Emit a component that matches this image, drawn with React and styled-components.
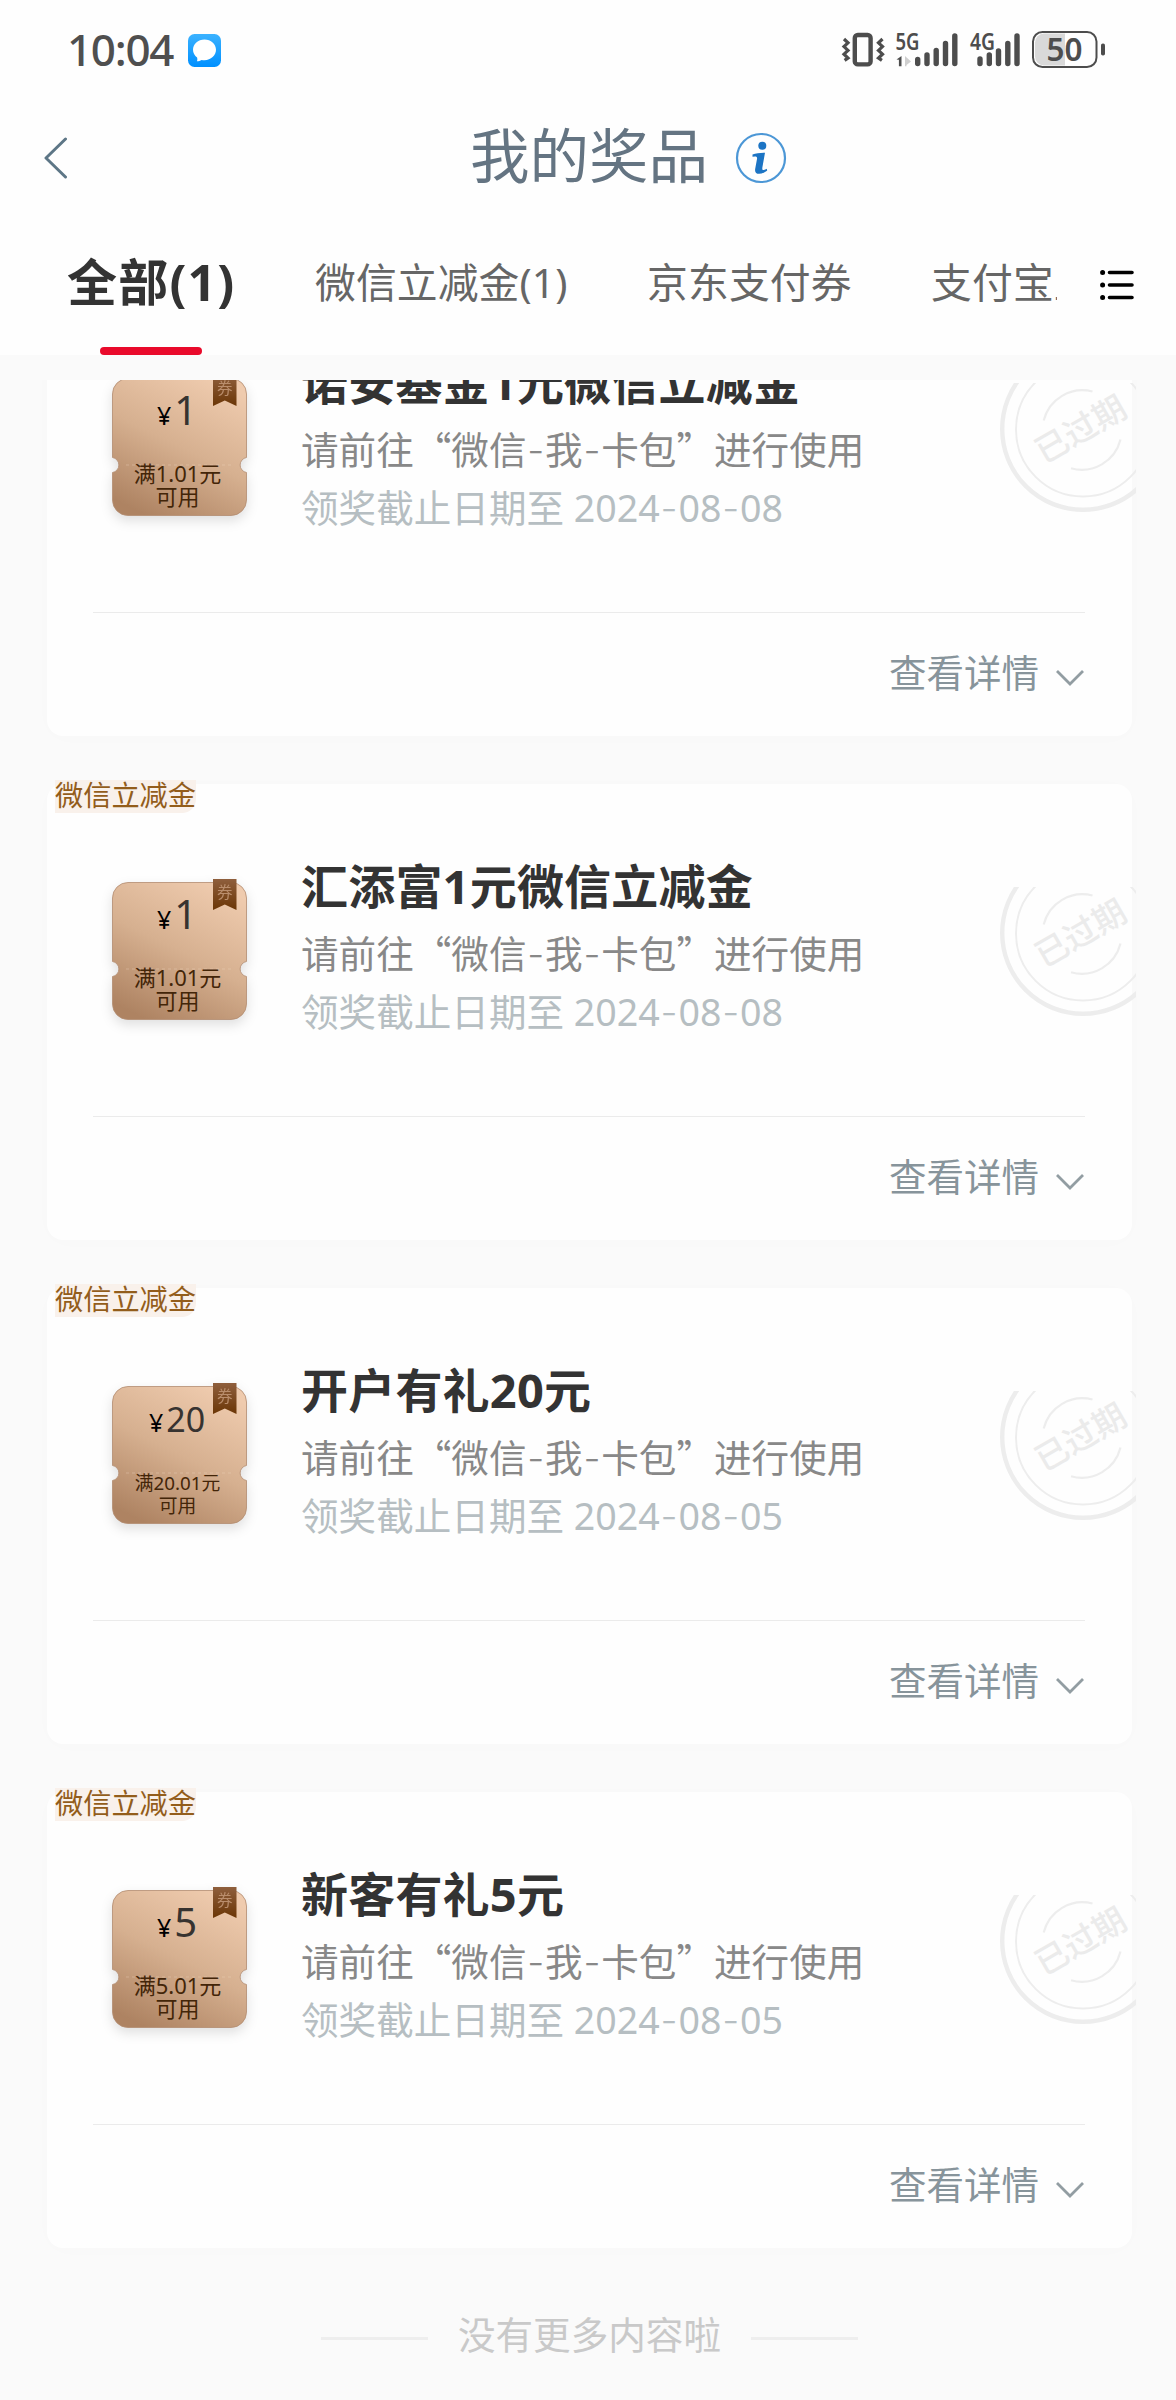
import React from "react";
import styled, { createGlobalStyle } from "styled-components";

const prizes = [
  { id: 1, title: "诺安基金1元微信立减金", amount: "1", limit: "1.01", date: "2024-08-08" },
  { id: 2, title: "汇添富1元微信立减金", amount: "1", limit: "1.01", date: "2024-08-08" },
  { id: 3, title: "开户有礼20元", amount: "20", limit: "20.01", date: "2024-08-05" },
  { id: 4, title: "新客有礼5元", amount: "5", limit: "5.01", date: "2024-08-05" },
];

const tabs = ["全部(1)", "微信立减金(1)", "京东支付券", "支付宝立减金"];

function withDashes(text) {
  return text.split("-").map((part, index) => (
    <React.Fragment key={index}>
      {index > 0 && <Dash>-</Dash>}
      {part}
    </React.Fragment>
  ));
}

function StatusIcons() {
  return (
    <StatusSvg width="264" height="40" viewBox="841 30 264 40">
      <g fill="none" stroke="#4d4d4d">
        <rect x="854.8" y="35" width="15.8" height="29.4" rx="3" strokeWidth="4.4" />
        <path d="M844 39l4 3.8-4 3.8 4 3.8-4 3.8 4 3.8-3.4 2.4" strokeWidth="3.2" />
        <path d="M882.5 39l-4 3.8 4 3.8-4 3.8 4 3.8-4 3.8 3.4 2.4" strokeWidth="3.2" />
        <rect x="1033" y="32" width="63.5" height="35" rx="9.5" strokeWidth="2" />
      </g>
      <path d="M1065 33.500v32h-21a9 9 0 0 1-9-9v-14a9 9 0 0 1 9-9z" fill="#d9d9d9" />
      <rect x="1101" y="43.5" width="4" height="12" rx="1.8" fill="#4d4d4d" />
      <g stroke="#4d4d4d" strokeWidth="5.4" strokeLinecap="round">
        <path d="M917.7 59.5v4M927 55v8.5M936.2 50.5v13M945.5 43.5v20M954.8 36v27.5" />
        <path d="M980 59v4.5M989.3 55v8.5M998.5 51v12.5M1007.8 43.5v20M1017 36v27.5" />
      </g>
      <path d="M896.5 59.5l5-3.500v10.200h-2.600v-6.500z" fill="#4d4d4d" />
      <path d="M905 56l6 5.500-4.500 3.500v1.200h-1.500z" fill="#cfcfcf" />
      <g fill="#4d4d4d" fontFamily="Noto Sans, sans-serif" fontWeight="600">
        <text x="895.5" y="49.5" fontSize="23" textLength="24" lengthAdjust="spacingAndGlyphs">5G</text>
        <text x="970" y="49.5" fontSize="23" textLength="25" lengthAdjust="spacingAndGlyphs">4G</text>
        <text x="1046.5" y="61" fontSize="32" textLength="36" lengthAdjust="spacingAndGlyphs">50</text>
      </g>
    </StatusSvg>
  );
}

function MessageIcon() {
  return (
    <svg width="33" height="33" viewBox="0 0 33 33">
      <defs>
        <linearGradient id="msg" x1="0" y1="0" x2="0" y2="1">
          <stop offset="0" stopColor="#3bb2ff" />
          <stop offset="1" stopColor="#0090ff" />
        </linearGradient>
      </defs>
      <rect width="33" height="33" rx="6.5" fill="url(#msg)" />
      <path
        d="M16.500 5.500c6.400 0 11.500 4.600 11.500 10.300s-5.100 10.400-11.500 10.400c-1 0-2-.1-2.900-.3-1.400.8-2.900 1.300-4.600 1.300.5-1.200.5-2.400.1-3.600C6.600 21.700 5 18.900 5 15.800 5 10.100 10.100 5.500 16.500 5.500z"
        fill="#fff"
      />
    </svg>
  );
}

function InfoIcon() {
  return (
    <svg width="52" height="52" viewBox="0 0 52 52">
      <circle cx="26" cy="26" r="24" fill="none" stroke="#4c97d6" strokeWidth="2.2" />
      <circle cx="27.3" cy="13.7" r="4" fill="#1c74c4" />
      <path
        d="M17.500 22.500c3.500-1.200 7.500-1.700 12.500-1.700l-2.600 14.500c-.4 2.200.2 2.900 1.500 2.600 1-.2 1.800-.6 2.800-1.100l.5 1.600c-2.800 2.400-5.600 3.400-8 3.400-3.200 0-4.600-1.700-4-5l1.800-9.700c.3-1.700-.2-2.500-1.900-2.500l-2.600.1z"
        fill="#1c74c4"
      />
    </svg>
  );
}

function CouponArt({ id }) {
  return (
    <CouponSvg width="135" height="145" viewBox="0 -4 135 145">
      <defs>
        <linearGradient id={`face${id}`} x1="0.75" y1="0" x2="0.25" y2="1">
          <stop offset="0" stopColor="#efcbae" />
          <stop offset="0.5" stopColor="#d6b090" />
          <stop offset="1" stopColor="#ae8362" />
        </linearGradient>
        <linearGradient id={`ribbon${id}`} x1="0" y1="0" x2="0" y2="1">
          <stop offset="0" stopColor="#8f5f3d" />
          <stop offset="1" stopColor="#6b3606" />
        </linearGradient>
      </defs>
      <path
        d="M16 .5h103a15.500 15.500 0 0 1 15.500 15.500v63.500a7.600 7.600 0 0 0 0 15V122a15.500 15.500 0 0 1-15.500 15.500H16A15.500 15.500 0 0 1 .5 122V94.500a7.600 7.600 0 0 0 0-15V16A15.500 15.500 0 0 1 16 .5z"
        fill={`url(#face${id})`}
        stroke="#b38c70"
        strokeOpacity="0.8"
      />
      <path d="M14 87h108" stroke="#f3d9c4" strokeOpacity="0.35" strokeDasharray="3 3" />
      <path d="M101-3h23.500v31l-11.700-5.500L101 28z" fill={`url(#ribbon${id})`} />
      <text x="105" y="16" fontSize="15.5" fill="#b98d6c" fontFamily="Noto Sans CJK SC, sans-serif">券</text>
    </CouponSvg>
  );
}

function ExpiredStamp() {
  return (
    <Stamp width="136" height="130" viewBox="0 0 136 130">
      <g fill="none" stroke="#ededed">
        <circle cx="83" cy="46" r="80.8" strokeWidth="4.4" />
        <circle cx="83" cy="46.5" r="67" strokeWidth="2" />
        <path d="M43.7 37.500A40 40 0 0 1 92.500 8.500M120.500 56.500A40 40 0 0 1 71 85.300" strokeWidth="2.2" />
      </g>
      <text
        x="80.5"
        y="58"
        fontSize="33"
        fontWeight="500"
        fill="#ebebeb"
        textAnchor="middle"
        fontFamily="Noto Sans CJK SC, sans-serif"
        transform="rotate(-30 80.5 46)"
      >
        已过期
      </text>
    </Stamp>
  );
}

function PrizeCard({ prize }) {
  const small = prize.amount.length > 1;
  return (
    <Card>
      <Tag>微信立减金</Tag>
      <CardBody>
        <Coupon>
          <CouponArt id={prize.id} />
          <Price $small={small}>
            <small>¥</small>
            {prize.amount}
          </Price>
          <Condition $small={small}>
            满{prize.limit}元<br />
            可用
          </Condition>
        </Coupon>
        <Info>
          <Title>{prize.title}</Title>
          <Desc>{withDashes("请前往“微信-我-卡包”进行使用")}</Desc>
          <Deadline>领奖截止日期至 {withDashes(prize.date)}</Deadline>
        </Info>
      </CardBody>
      <CardFooter>
        查看详情
        <svg width="30" height="18" viewBox="0 0 30 18">
          <path d="M2 2l13 13L28 2" fill="none" stroke="#929da2" strokeWidth="2.8" />
        </svg>
      </CardFooter>
      <ExpiredStamp />
    </Card>
  );
}

export default function App() {
  return (
    <Page lang="zh-CN">
      <GlobalStyle />
      <StatusBar>
        <Clock>10:04</Clock>
        <MessageIcon />
        <Spacer />
        <StatusIcons />
      </StatusBar>
      <NavBar>
        <BackButton>
          <svg width="24" height="42" viewBox="0 0 24 42">
            <path d="M21.500 2L2 21l19.500 19" fill="none" stroke="#5d7686" strokeWidth="3" strokeLinecap="round" strokeLinejoin="round" />
          </svg>
        </BackButton>
        <Heading>我的奖品</Heading>
        <InfoIcon />
      </NavBar>
      <TabBar>
        <TabList>
          {tabs.map((tab, index) => (
            <Tab key={tab} $active={index === 0}>
              {tab}
            </Tab>
          ))}
        </TabList>
        <svg width="34" height="32" viewBox="0 0 34 32">
          <g stroke="#000" strokeWidth="3.6" strokeLinecap="round">
            <path d="M9.500 3.500H32M9.500 16H32M9.500 28.500H32" />
            <path d="M2.600 3.500h.01M2.600 16h.01M2.600 28.500h.01" strokeWidth="5" />
          </g>
        </svg>
      </TabBar>
      <ScrollArea>
        <PrizeList>
          {prizes.map((prize) => (
            <PrizeCard key={prize.id} prize={prize} />
          ))}
        </PrizeList>
        <EndOfList>没有更多内容啦</EndOfList>
      </ScrollArea>
    </Page>
  );
}

const GlobalStyle = createGlobalStyle`
  * {
    box-sizing: border-box;
  }
  body {
    margin: 0;
    background: #fafafa;
  }
`;

const Page = styled.div`
  width: 1176px;
  height: 2400px;
  display: flex;
  flex-direction: column;
  overflow: hidden;
  background: #fafafa;
  font-family: "Noto Sans", "Noto Sans CJK SC", sans-serif;
`;

const StatusBar = styled.div`
  height: 100px;
  padding: 0 71px 0 67px;
  display: flex;
  align-items: center;
  background: #fefefe;
`;

const StatusSvg = styled.svg`
  overflow: visible;
`;

const Clock = styled.div`
  width: 121px;
  margin-top: -2px;
  font-size: 44px;
  font-weight: 500;
  line-height: 60px;
  letter-spacing: -1.3px;
  color: #4f4f4f;
`;

const Spacer = styled.div`
  flex: 1;
`;

const NavBar = styled.header`
  height: 115px;
  padding: 1px 0 0 44px;
  display: flex;
  align-items: center;
  background: #fefefe;
`;

const BackButton = styled.div`
  width: 426px;
  display: flex;
`;

const Heading = styled.h1`
  width: 265px;
  margin: -7px 0 0;
  font-size: 59.5px;
  font-weight: 400;
  line-height: 80px;
  color: #647482;
`;

const TabBar = styled.nav`
  height: 140px;
  padding: 0 42px 0 67px;
  display: flex;
  align-items: center;
  justify-content: space-between;
  background: #fefefe;
`;

const TabList = styled.div`
  width: 990px;
  height: 140px;
  display: flex;
  gap: 79.5px;
  overflow: hidden;
`;

const Tab = styled.div`
  flex-shrink: 0;
  display: flex;
  flex-direction: column;
  align-items: center;
  justify-content: space-between;
  white-space: nowrap;
  line-height: 135px;
  font-size: ${(props) => (props.$active ? "50px" : "40.8px")};
  font-weight: ${(props) => (props.$active ? 700 : 400)};
  letter-spacing: ${(props) => (props.$active ? "1.2px" : "0.1px")};
  color: ${(props) => (props.$active ? "#333" : "#666")};
  &::after {
    content: "";
    width: 102px;
    height: 8px;
    margin-top: -3px;
    flex-shrink: 0;
    border-radius: 4px;
    background: ${(props) => (props.$active ? "#e90a2b" : "transparent")};
  }
`;

const ScrollArea = styled.main`
  flex: 1;
  margin-top: 25px;
  overflow: hidden;
`;

/* the list is scrolled, so the first card is cut at the top */
const PrizeList = styled.div`
  margin-top: -100px;
  padding: 0 44px 0 47px;
  display: flex;
  flex-direction: column;
  gap: 48px;
`;

const Card = styled.section`
  position: relative;
  height: 456px;
  border-radius: 16px;
  background: #fefefe;
  box-shadow: 0 2px 24px rgba(0, 0, 0, 0.012);
`;

const Tag = styled.div`
  width: 141px;
  height: 33px;
  margin: -4px 0 0 8px;
  border-radius: 0 0 14px 0;
  background: #f9f1eb;
  font-size: 28.2px;
  line-height: 31px;
  white-space: nowrap;
  color: #935d1b;
`;

const CardBody = styled.div`
  height: 304px;
  margin: 0 47px 0 46px;
  padding: 0 0 0 19px;
  display: flex;
  border-bottom: 1px solid #ebebeb;
`;

const Coupon = styled.div`
  position: relative;
  width: 135px;
  height: 138px;
  margin-top: 69px;
  display: flex;
  flex-direction: column;
  align-items: center;
`;

const CouponSvg = styled.svg`
  position: absolute;
  left: 0;
  top: -4px;
  overflow: visible;
  filter: drop-shadow(0 5px 6px rgba(0, 0, 0, 0.12));
`;

const Price = styled.div`
  position: relative;
  height: 62px;
  margin-right: 5px;
  font-size: ${(props) => (props.$small ? "34px" : "40px")};
  line-height: ${(props) => (props.$small ? "67px" : "63px")};
  color: #373330;
  small {
    margin-right: 3px;
    font-size: 25px;
    color: #000;
  }
`;

const Condition = styled.div`
  position: relative;
  margin-top: ${(props) => (props.$small ? "24px" : "22px")};
  margin-right: 4px;
  font-size: ${(props) => (props.$small ? "18.8px" : "22px")};
  line-height: 22.6px;
  text-align: center;
  color: #432508;
`;

const Info = styled.div`
  margin: 43px 0 0 54px;
  white-space: nowrap;
`;

const Title = styled.h2`
  margin: 0;
  font-size: 47px;
  font-weight: 700;
  line-height: 60px;
  letter-spacing: 0.2px;
  color: #333;
`;

const Desc = styled.p`
  margin: 8px 0 0;
  font-family: "Noto Sans CJK SC", sans-serif;
  font-size: 37.6px;
  line-height: 55px;
  color: #888;
`;

const Deadline = styled.p`
  margin: 0;
  font-size: 37.6px;
  line-height: 59px;
  color: #b6bec2;
`;

const Dash = styled.span`
  margin: 0 0.8px;
  font-family: Inter, sans-serif;
  font-weight: 300;
`;

const CardFooter = styled.div`
  height: 123px;
  padding: 0 47px 8px 0;
  display: flex;
  align-items: center;
  justify-content: flex-end;
  gap: 16px;
  font-size: 37.5px;
  color: #87949b;
  svg {
    margin-top: 15px;
  }
`;

const Stamp = styled.svg`
  position: absolute;
  top: 103px;
  right: -4px;
`;

const EndOfList = styled.div`
  height: 152px;
  display: flex;
  align-items: center;
  justify-content: center;
  gap: 30px;
  padding: 16px 0 0 3px;
  font-size: 37.6px;
  color: #c9c9c9;
  &::before,
  &::after {
    content: "";
    width: 107px;
    height: 3px;
    margin-top: 13px;
    background: #eee;
  }
`;
